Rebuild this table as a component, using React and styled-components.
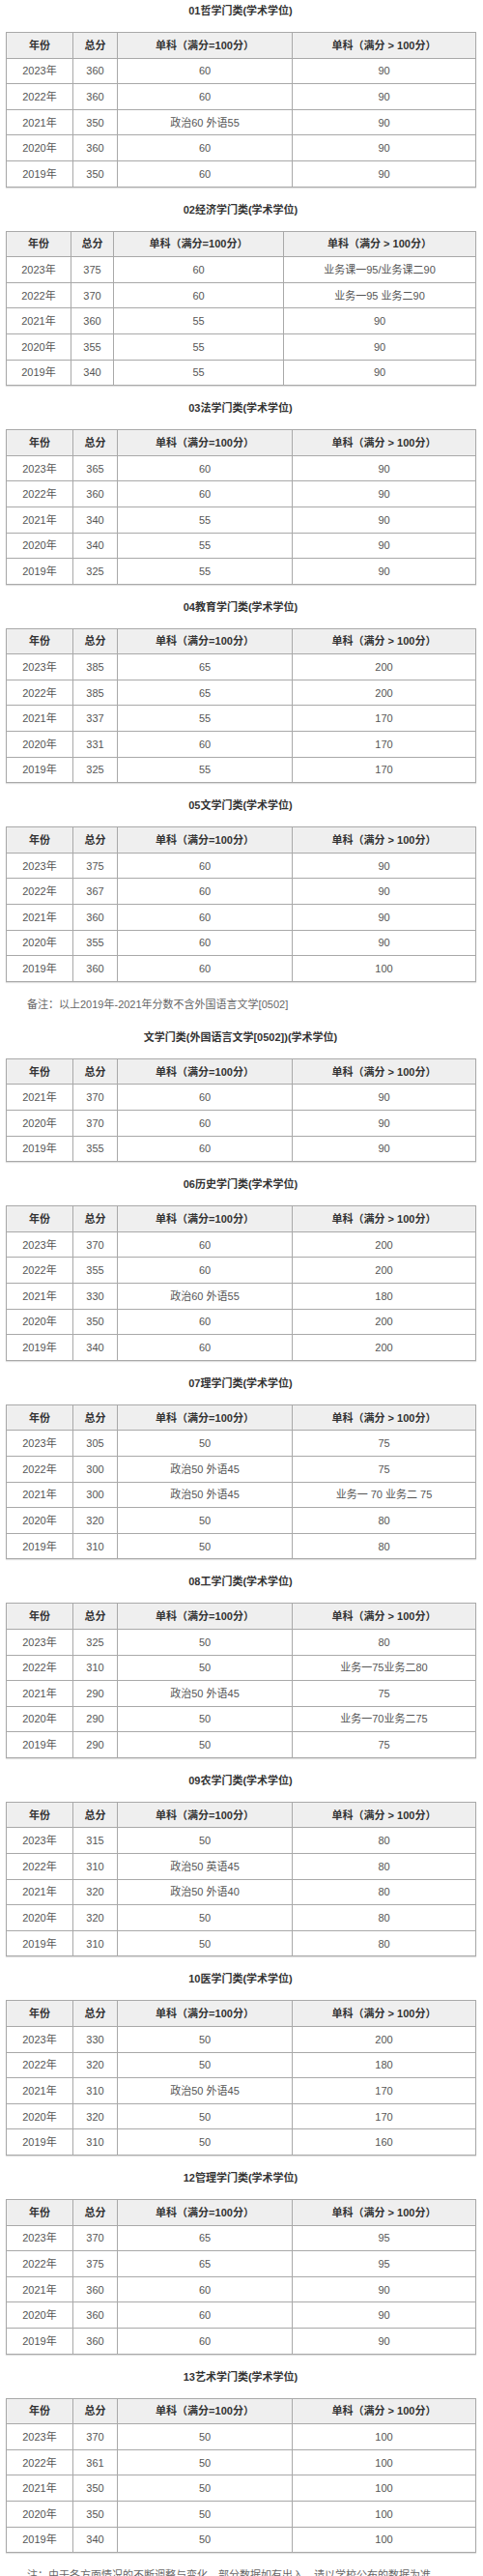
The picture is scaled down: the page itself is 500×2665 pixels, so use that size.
import React from "react";
import styled, { createGlobalStyle } from "styled-components";

const GlobalStyle = createGlobalStyle`
  html, body {
    margin: 0;
    padding: 0;
    background: #fff;
  }
  body {
    font-family: "Liberation Sans", "Noto Sans CJK SC", sans-serif;
    color: #444;
  }
`;

const Page = styled.div`
  width: 500px;
  box-sizing: border-box;
  padding: 0 8px 7px 6px;
`;

const Section = styled.section`
  margin-top: ${(p) => (p.$first ? "0" : "12px")};
`;

const Title = styled.h3`
  margin: 0 0 11px;
  height: 22px;
  line-height: 22px;
  text-align: center;
  font-size: 11px;
  font-weight: bold;
  color: #333;
`;

const Note = styled.p`
  margin: 12px 0 0;
  padding-left: 22px;
  height: 22px;
  line-height: 22px;
  font-size: 11px;
  color: #666;
`;

const Table = styled.table`
  width: 486px;
  border-collapse: collapse;
  table-layout: fixed;
  border: 1px solid #a9a9a9;
  box-shadow: 0 1px 1px rgba(0, 0, 0, 0.12);
`;

const HeadCell = styled.th`
  height: 25.6px;
  padding: 0;
  line-height: 16px;
  border: 1px solid #a9a9a9;
  background: #efefef;
  font-size: 11px;
  font-weight: bold;
  color: #333;
  text-align: center;
  white-space: nowrap;
`;

const Cell = styled.td`
  height: 25.6px;
  padding: 0;
  line-height: 16px;
  border: 1px solid #a9a9a9;
  font-size: 11px;
  color: #555;
  text-align: center;
  white-space: nowrap;
`;

const STD_COLS = [69, 46, 181, 190];
const WIDE_COLS = [67, 44, 176, 199];

const sections = [
  {
    title: "01哲学门类(学术学位)",
    rows: [
      ["2023年", "360", "60", "90"],
      ["2022年", "360", "60", "90"],
      ["2021年", "350", "政治60 外语55", "90"],
      ["2020年", "360", "60", "90"],
      ["2019年", "350", "60", "90"],
    ],
  },
  {
    title: "02经济学门类(学术学位)",
    cols: WIDE_COLS,
    rows: [
      ["2023年", "375", "60", "业务课一95/业务课二90"],
      ["2022年", "370", "60", "业务一95 业务二90"],
      ["2021年", "360", "55", "90"],
      ["2020年", "355", "55", "90"],
      ["2019年", "340", "55", "90"],
    ],
  },
  {
    title: "03法学门类(学术学位)",
    rows: [
      ["2023年", "365", "60", "90"],
      ["2022年", "360", "60", "90"],
      ["2021年", "340", "55", "90"],
      ["2020年", "340", "55", "90"],
      ["2019年", "325", "55", "90"],
    ],
  },
  {
    title: "04教育学门类(学术学位)",
    rows: [
      ["2023年", "385", "65", "200"],
      ["2022年", "385", "65", "200"],
      ["2021年", "337", "55", "170"],
      ["2020年", "331", "60", "170"],
      ["2019年", "325", "55", "170"],
    ],
  },
  {
    title: "05文学门类(学术学位)",
    note: "备注：以上2019年-2021年分数不含外国语言文学[0502]",
    rows: [
      ["2023年", "375", "60", "90"],
      ["2022年", "367", "60", "90"],
      ["2021年", "360", "60", "90"],
      ["2020年", "355", "60", "90"],
      ["2019年", "360", "60", "100"],
    ],
  },
  {
    title: "文学门类(外国语言文学[0502])(学术学位)",
    rows: [
      ["2021年", "370", "60", "90"],
      ["2020年", "370", "60", "90"],
      ["2019年", "355", "60", "90"],
    ],
  },
  {
    title: "06历史学门类(学术学位)",
    rows: [
      ["2023年", "370", "60", "200"],
      ["2022年", "355", "60", "200"],
      ["2021年", "330", "政治60 外语55", "180"],
      ["2020年", "350", "60", "200"],
      ["2019年", "340", "60", "200"],
    ],
  },
  {
    title: "07理学门类(学术学位)",
    rows: [
      ["2023年", "305", "50", "75"],
      ["2022年", "300", "政治50 外语45", "75"],
      ["2021年", "300", "政治50 外语45", "业务一 70 业务二 75"],
      ["2020年", "320", "50", "80"],
      ["2019年", "310", "50", "80"],
    ],
  },
  {
    title: "08工学门类(学术学位)",
    rows: [
      ["2023年", "325", "50", "80"],
      ["2022年", "310", "50", "业务一75业务二80"],
      ["2021年", "290", "政治50 外语45", "75"],
      ["2020年", "290", "50", "业务一70业务二75"],
      ["2019年", "290", "50", "75"],
    ],
  },
  {
    title: "09农学门类(学术学位)",
    rows: [
      ["2023年", "315", "50", "80"],
      ["2022年", "310", "政治50 英语45", "80"],
      ["2021年", "320", "政治50 外语40", "80"],
      ["2020年", "320", "50", "80"],
      ["2019年", "310", "50", "80"],
    ],
  },
  {
    title: "10医学门类(学术学位)",
    rows: [
      ["2023年", "330", "50", "200"],
      ["2022年", "320", "50", "180"],
      ["2021年", "310", "政治50 外语45", "170"],
      ["2020年", "320", "50", "170"],
      ["2019年", "310", "50", "160"],
    ],
  },
  {
    title: "12管理学门类(学术学位)",
    rows: [
      ["2023年", "370", "65", "95"],
      ["2022年", "375", "65", "95"],
      ["2021年", "360", "60", "90"],
      ["2020年", "360", "60", "90"],
      ["2019年", "360", "60", "90"],
    ],
  },
  {
    title: "13艺术学门类(学术学位)",
    note: "注：由于各方面情况的不断调整与变化，部分数据如有出入，请以学校公布的数据为准。",
    rows: [
      ["2023年", "370", "50", "100"],
      ["2022年", "361", "50", "100"],
      ["2021年", "350", "50", "100"],
      ["2020年", "350", "50", "100"],
      ["2019年", "340", "50", "100"],
    ],
  },
];

const HEADERS = ["年份", "总分", "单科（满分=100分）", "单科（满分 > 100分）"];

const ScoreTable = ({ rows, cols = STD_COLS }) => (
  <Table>
    <colgroup>
      {cols.map((w, i) => (
        <col key={i} style={{ width: w }} />
      ))}
    </colgroup>
    <thead>
      <tr>
        {HEADERS.map((h) => (
          <HeadCell key={h}>{h}</HeadCell>
        ))}
      </tr>
    </thead>
    <tbody>
      {rows.map((row) => (
        <tr key={row[0]}>
          {row.map((v, i) => (
            <Cell key={i}>{v}</Cell>
          ))}
        </tr>
      ))}
    </tbody>
  </Table>
);

export default function App() {
  return (
    <Page>
      <GlobalStyle />
      {sections.map((s, i) => (
        <Section key={s.title} $first={i === 0}>
          <Title>{s.title}</Title>
          <ScoreTable rows={s.rows} cols={s.cols} />
          {s.note && <Note>{s.note}</Note>}
        </Section>
      ))}
    </Page>
  );
}
